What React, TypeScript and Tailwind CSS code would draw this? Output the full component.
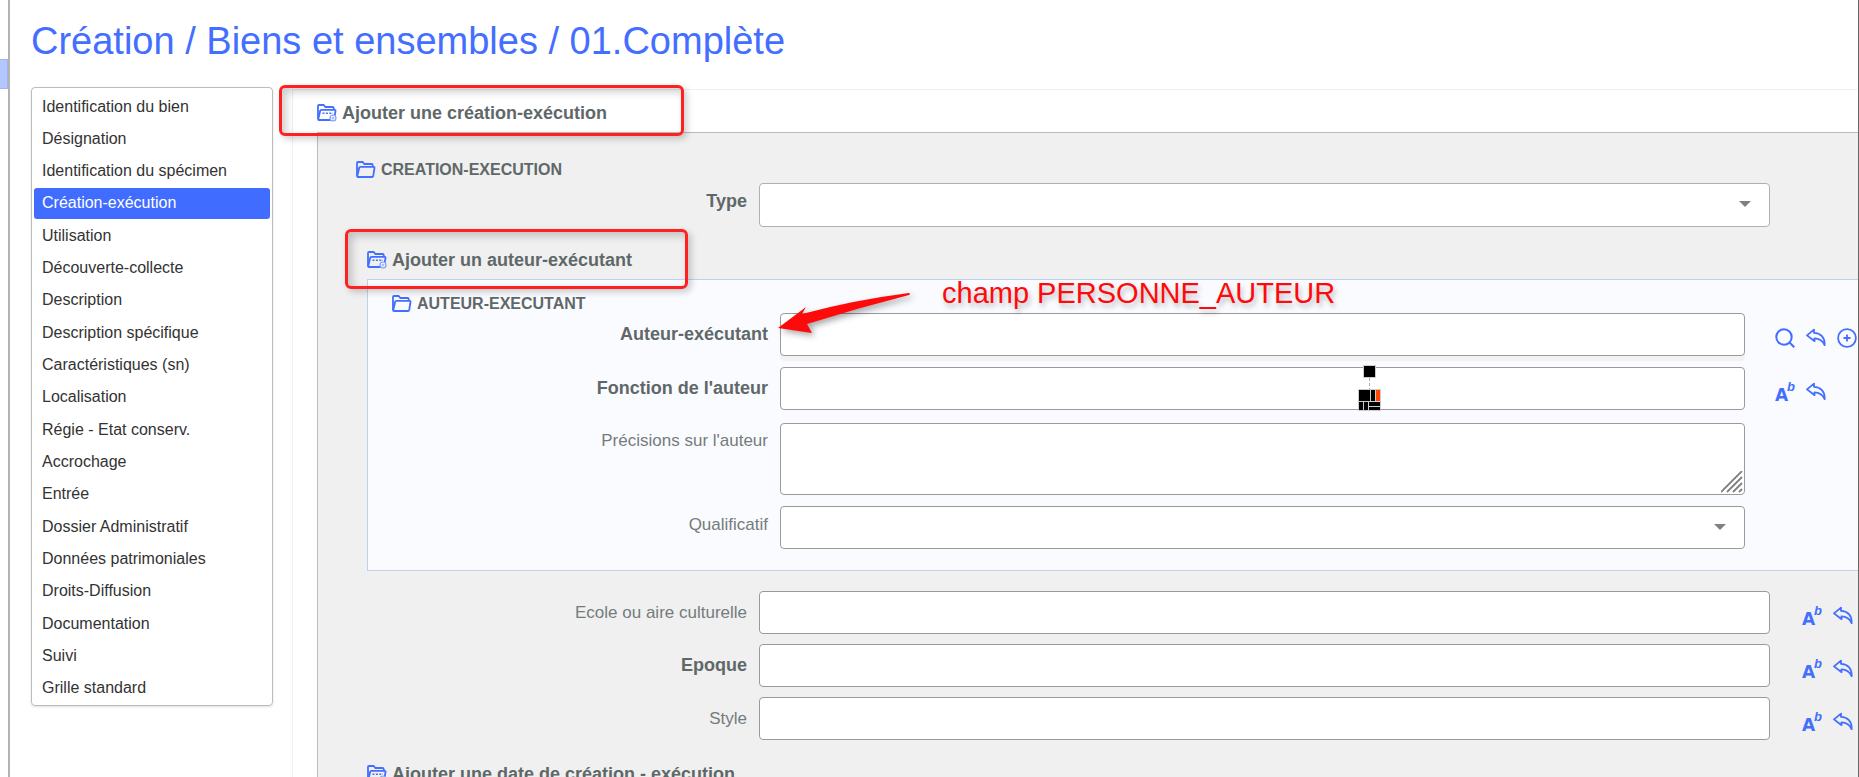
import { useState, type ReactNode } from "react";

const SECTIONS = [
  "Identification du bien",
  "Désignation",
  "Identification du spécimen",
  "Création-exécution",
  "Utilisation",
  "Découverte-collecte",
  "Description",
  "Description spécifique",
  "Caractéristiques (sn)",
  "Localisation",
  "Régie - Etat conserv.",
  "Accrochage",
  "Entrée",
  "Dossier Administratif",
  "Données patrimoniales",
  "Droits-Diffusion",
  "Documentation",
  "Suivi",
  "Grille standard",
];

function FolderIcon({ add = false }: { add?: boolean }) {
  return (
    <svg width="20" height="18" viewBox="0 0 20 18" fill="none" stroke="#436eff" strokeWidth="1.8" className="shrink-0">
      <path d="M1 15V2Q1 1 2 1H6.6L8.4 3H15.4Q16.8 3 16.8 4.4V6" />
      <path d="M1.2 15.2L3.2 6.7Q3.4 5.8 4.4 5.8H17.6Q18.7 5.8 18.5 7L17.2 15Q17 16 16 16H2Q1 16 1.2 15.2Z" />
      {add && (
        <>
          <path d="M5.5 9.3H16" strokeDasharray="2 1.4" strokeWidth="1.5" />
          <circle cx="16" cy="14" r="3" fill="#f4f6ff" stroke="#7f9cff" strokeWidth="1.2" />
          <path d="M14.6 14H17.4M16 12.6V15.4" stroke="#7f9cff" strokeWidth="0.8" />
        </>
      )}
    </svg>
  );
}

function Legend({ children, add, className }: { children: ReactNode; add?: boolean; className?: string }) {
  return (
    <div className={`flex items-center gap-[5px] h-[18px] leading-[18px] font-bold text-[#5f6868] ${add ? "text-[18px]" : "text-[16px]"} ${className ?? ""}`}>
      <FolderIcon add={add} />
      {add ? <button type="button" className="cursor-pointer">{children}</button> : <h2>{children}</h2>}
    </div>
  );
}

function SearchButton() {
  return (
    <button type="button" aria-label="Rechercher">
      <svg width="20" height="20" viewBox="0 0 20 20" fill="none" stroke="#436eff" strokeWidth="2">
        <circle cx="9" cy="9" r="7.7" />
        <path d="M14.5 14.5L19.3 19.3" />
      </svg>
    </button>
  );
}

function UndoButton() {
  return (
    <button type="button" aria-label="Rétablir">
      <svg width="20" height="20" viewBox="0 0 20 20" fill="none" stroke="#436eff" strokeWidth="1.8" strokeLinejoin="round">
        <path d="M1 7.4L8 1.6V4.8C14.4 5.1 19.2 9.2 18.6 17.2C16.6 12.4 13.4 10.6 8.4 10.4L8.6 13.2Z" />
      </svg>
    </button>
  );
}

function AddButton() {
  return (
    <button type="button" aria-label="Ajouter">
      <svg width="20" height="20" viewBox="0 0 20 20" fill="none" stroke="#436eff" strokeWidth="1.8">
        <circle cx="10" cy="10" r="8.9" />
        <path d="M6.5 10H13.5M10 6.5V13.5" />
      </svg>
    </button>
  );
}

function TermButton() {
  return (
    <button type="button" aria-label="Liste de termes" className="flex w-5 h-5 text-[#436eff] font-bold leading-5">
      <span className="w-3 pt-[3px] text-[17px] font-['DejaVu_Sans',sans-serif]">A</span>
      <i className="text-[13px] leading-[10px]">b</i>
    </button>
  );
}

interface FieldProps {
  id: string;
  label: string;
  bold?: boolean;
  kind?: "input" | "select" | "textarea";
  nested?: boolean;
  shaded?: boolean;
  actions?: ReactNode;
}

const BOX = "block w-full bg-white border border-[#9a9a9a] rounded outline-none px-3 text-[16px] text-[#333]";

function Field({ id, label, bold, kind = "input", nested, shaded, actions }: FieldProps) {
  return (
    <div className={`grid ${nested ? "grid-cols-[400px_1fr_83px] gap-x-3" : "grid-cols-[429px_1fr_56px] gap-x-3"}`}>
      <label
        htmlFor={id}
        className={`text-right ${kind === "select" ? "leading-[37px]" : kind === "textarea" ? "leading-[36px]" : "leading-[43px]"} ${bold ? "text-[18px] font-bold text-[#5f6868]" : "text-[17px] text-[#747c7c]"}`}
      >
        {label}
      </label>
      <div className={nested ? "relative mr-[18px]" : "relative mr-5"}>
        {kind === "input" && <input id={id} type="text" className={`${BOX} h-[43px] ${shaded ? "shadow-[0_5px_0_#f2f2f2]" : ""}`} />}
        {kind === "textarea" && (
          <>
            <textarea id={id} className={`${BOX} h-[72px] resize-none`} />
            <svg width="22" height="22" viewBox="0 0 22 22" stroke="#808080" strokeWidth="1.8" className="absolute right-0.5 bottom-0.5 pointer-events-none">
              <path d="M0 21L21 0M6 21L21 6M12 21L21 12M18 21L21 18" />
            </svg>
          </>
        )}
        {kind === "select" && (
          <>
            <select id={id} className={`${BOX} appearance-none ${nested ? "h-[43px]" : "h-[44px] border-[#b0b0b0]"}`} />
            <svg width="12" height="6" viewBox="0 0 12 6" fill="#808080" className="absolute right-[19px] top-[18px] pointer-events-none">
              <path d="M0 0H12L6 6Z" />
            </svg>
          </>
        )}
      </div>
      <div className="flex items-start gap-[11px] pt-[15px]">{actions}</div>
    </div>
  );
}

const CALLOUT = "absolute border-[3px] border-[#ff2020] rounded-md pointer-events-none shadow-[3px_3px_7px_rgba(0,0,0,0.2),inset_4px_4px_8px_rgba(0,0,0,0.2)]";

export default function App() {
  const [active, setActive] = useState("Création-exécution");
  const term = (
    <>
      <TermButton />
      <UndoButton />
    </>
  );

  return (
    <div className="relative flex h-screen overflow-hidden bg-white border-r border-[#666] font-['Liberation_Sans',Arial,sans-serif]">
      <div className="w-[10px] shrink-0 border-r-2 border-[#b3b3b3] pt-[59px]">
        <div className="h-[30px] bg-[#b3c6ff] border border-l-0 border-[#9db4f8]" />
      </div>

      <div className="flex-1 min-w-0 pl-[21px] pt-[19px]">
        <h1 className="mb-6 text-[38px] leading-[44px] text-[#436eff]">Création / Biens et ensembles / 01.Complète</h1>

        <div className="flex items-start gap-[19px]">
          <nav className="w-[242px] h-[619px] shrink-0 flex flex-col justify-between px-0.5 pt-[3px] pb-px border border-[#bcbcbc] rounded shadow-sm">
            {SECTIONS.map(name => (
              <button
                key={name}
                type="button"
                onClick={() => setActive(name)}
                className={`h-[31px] shrink-0 px-2 text-left text-[16px] rounded-[3px] ${name === active ? "bg-[#406dff] text-white" : "text-[#333]"}`}
              >
                {name}
              </button>
            ))}
          </nav>

          <main className="flex-1 min-w-0 mt-0.5 pl-6 border-l border-t border-[#f0f0f0]">
            <Legend add className="mt-[14px] mb-[10px]">Ajouter une création-exécution</Legend>

            <section className="pt-7 pb-20 bg-[#f0f0f0] border-l border-t border-[#bcbcbc]">
              <Legend className="ml-[38px] mb-1">CREATION-EXECUTION</Legend>
              <Field id="type" label="Type" bold kind="select" />

              <Legend add className="ml-[49px] mt-6 mb-[10px]">Ajouter un auteur-exécutant</Legend>
              <section className="ml-[49px] pt-[15px] pb-[21px] bg-[#fafbff] border border-r-0 border-[#bdd2ec]">
                <Legend className="ml-6">AUTEUR-EXECUTANT</Legend>
                <div className="flex flex-col gap-[11px]">
                  <Field
                    id="auteur"
                    label="Auteur-exécutant"
                    bold
                    nested
                    shaded
                    actions={
                      <>
                        <SearchButton />
                        <UndoButton />
                        <AddButton />
                      </>
                    }
                  />
                  <Field id="fonction" label="Fonction de l'auteur" bold nested actions={term} />
                  <div className="pt-0.5">
                    <Field id="precisions" label="Précisions sur l'auteur" kind="textarea" nested />
                  </div>
                  <Field id="qualificatif" label="Qualificatif" kind="select" nested />
                </div>
              </section>

              <div className="flex flex-col gap-[10px] mt-5">
                <Field id="ecole" label="Ecole ou aire culturelle" actions={term} />
                <Field id="epoque" label="Epoque" bold actions={term} />
                <Field id="style" label="Style" actions={term} />
              </div>
              <Legend add className="ml-[49px] mt-[25px]">Ajouter une date de création - exécution</Legend>
            </section>
          </main>
        </div>
      </div>

      {/* Annotations laid over the form */}
      <div className={`${CALLOUT} left-[279px] top-[85px] w-[405px] h-[51px]`} />
      <div className={`${CALLOUT} left-[345px] top-[229px] w-[343px] h-[60px]`} />
      <svg width="140" height="50" viewBox="0 0 140 50" className="absolute left-[774px] top-[290px] pointer-events-none drop-shadow-[3px_3px_3px_rgba(0,0,0,0.35)]">
        <path d="M4 38L32 17L28 24Q80 10 135 3Q137 4 135 5Q84 18 33 34L38 43Z" fill="#ff0a0a" />
      </svg>
      <p className="absolute left-[942px] top-[277px] text-[29px] leading-8 text-[#ff0a0a] whitespace-nowrap [text-shadow:2px_4px_5px_rgba(0,0,0,0.25)]">
        champ PERSONNE_AUTEUR
      </p>
      <svg width="24" height="48" viewBox="0 0 24 48" className="absolute left-[1358px] top-[364px] pointer-events-none">
        <path d="M11.5 14V26" stroke="#aaa" strokeDasharray="3 2" />
        <path d="M5 1H18V14H5ZM0 25H23V47H0Z" fill="#ccc" />
        <path d="M6 2H17V13H6ZM1 26H12V37H1ZM13 26H17V37H13ZM1 38H5V46H1ZM6 38H10V46H6ZM11 38H22V42H11ZM11 43H22V46H11Z" fill="#000" />
        <path d="M18 26H22V37H18Z" fill="#ff4500" />
      </svg>
    </div>
  );
}
